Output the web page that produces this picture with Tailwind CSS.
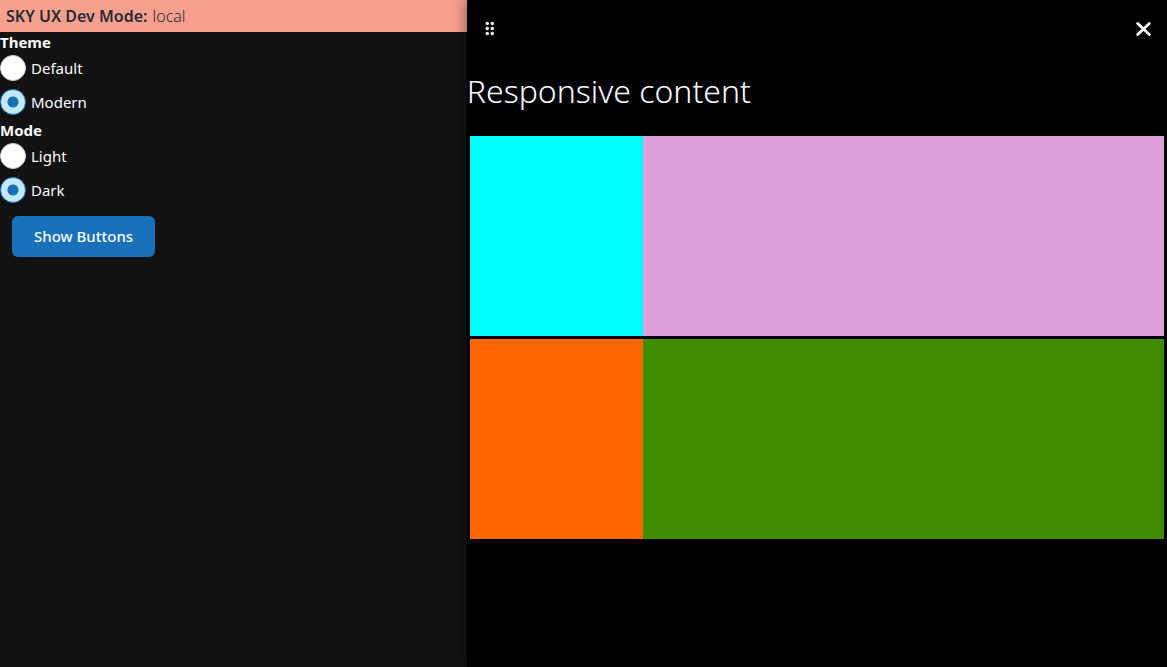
<!DOCTYPE html>
<html lang="en">
<head>
<meta charset="utf-8">
<meta name="viewport" content="width=device-width, initial-scale=1">
<title>Flyout</title>
<script src="https://cdn.jsdelivr.net/npm/@tailwindcss/browser@4"></script>
</head>
<body class="flex min-h-screen overflow-x-hidden bg-[#121212] font-['Noto_Sans','Open_Sans',sans-serif] text-[15px] leading-5 text-[#fbfcfe]">
<main class="min-w-0 flex-[2]">
  <div class="flex h-8 items-center gap-[5px] bg-[#f7a08f] px-[6px] text-base text-[#282b31]"><strong class="font-semibold">SKY UX Dev Mode:</strong><span class="font-light">local</span></div>
  <fieldset>
    <legend class="h-[23px] leading-5 font-bold">Theme</legend>
    <div class="flex flex-col gap-2 pb-[2px]">
      <label class="flex h-[26px] items-center gap-[5px]"><input type="radio" name="theme" class="size-[26px] appearance-none rounded-full border border-[#cdcfd2] bg-white checked:border-[#1870b8] checked:bg-[radial-gradient(circle,#1870b8_5px,#c1e8fb_6px)]">Default</label>
      <label class="flex h-[26px] items-center gap-[5px]"><input type="radio" name="theme" checked class="size-[26px] appearance-none rounded-full border border-[#cdcfd2] bg-white checked:border-[#1870b8] checked:bg-[radial-gradient(circle,#1870b8_5px,#c1e8fb_6px)]">Modern</label>
    </div>
  </fieldset>
  <fieldset>
    <legend class="h-[26px] leading-[26px] font-bold">Mode</legend>
    <div class="flex flex-col gap-2">
      <label class="flex h-[26px] items-center gap-[5px]"><input type="radio" name="mode" class="size-[26px] appearance-none rounded-full border border-[#cdcfd2] bg-white checked:border-[#1870b8] checked:bg-[radial-gradient(circle,#1870b8_5px,#c1e8fb_6px)]">Light</label>
      <label class="flex h-[26px] items-center gap-[5px]"><input type="radio" name="mode" checked class="size-[26px] appearance-none rounded-full border border-[#cdcfd2] bg-white checked:border-[#1870b8] checked:bg-[radial-gradient(circle,#1870b8_5px,#c1e8fb_6px)]">Dark</label>
    </div>
  </fieldset>
  <button type="button" class="mx-3 mt-[13px] h-[41px] rounded-[6px] bg-[#1870b8] px-[22px] pb-[2px] font-medium whitespace-nowrap">Show Buttons</button>
</main>
<aside class="relative min-w-0 flex-[3] bg-black shadow-[0_0_15px_rgba(0,0,0,0.5)]">
  <header class="flex h-[58px] items-center justify-between px-4">
    <button type="button" aria-label="Resize flyout" class="size-4 text-[#fbfcfe]">
      <svg class="size-4" viewBox="0 0 16 16" fill="currentColor"><circle cx="4.3" cy="2.5" r="1.7"/><circle cx="9.3" cy="2.5" r="1.7"/><circle cx="4.3" cy="7.5" r="1.7"/><circle cx="9.3" cy="7.5" r="1.7"/><circle cx="4.3" cy="12.5" r="1.7"/><circle cx="9.3" cy="12.5" r="1.7"/></svg>
    </button>
    <button type="button" aria-label="Close flyout" class="size-4 text-[#fbfcfe]">
      <svg class="size-4" viewBox="0 0 16 16" fill="none" stroke="currentColor" stroke-width="2.8" stroke-linecap="round"><path d="M2.7 2.5L14.3 13.5M14.3 2.5L2.7 13.5"/></svg>
    </button>
  </header>
  <h1 class="mt-[13px] mb-[25px] text-[32px] leading-10 font-light">Responsive content</h1>
  <div class="flex flex-col gap-[3px] px-[3px]">
    <div class="grid h-[200px] grid-cols-4"><div class="bg-[#00ffff]"></div><div class="col-span-3 bg-[#dda0dd]"></div></div>
    <div class="grid h-[200px] grid-cols-4"><div class="bg-[#ff6600]"></div><div class="col-span-3 bg-[#408c00]"></div></div>
  </div>
</aside>
</body>
</html>
